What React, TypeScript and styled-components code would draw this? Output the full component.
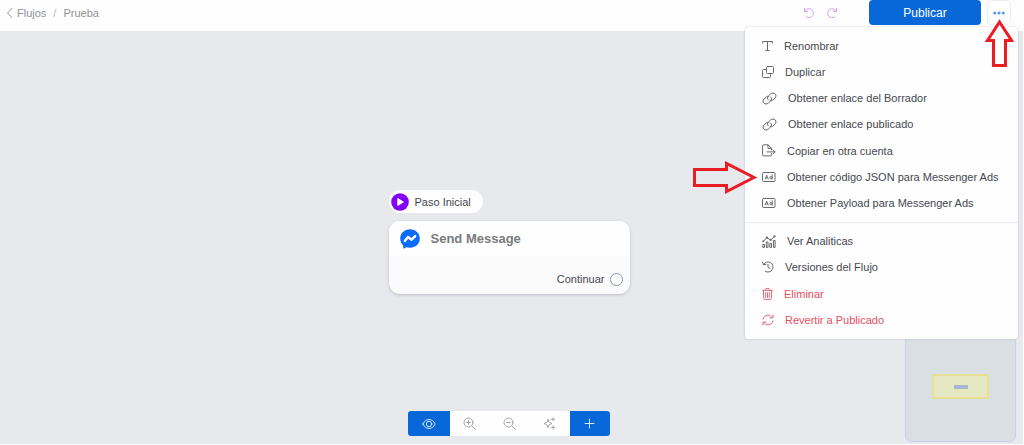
import React from "react";
import styled, { createGlobalStyle, css } from "styled-components";

const GlobalStyle = createGlobalStyle`
  *, *::before, *::after { box-sizing: border-box; }
  html, body, #root { height: 100%; }
  body {
    margin: 0;
    background: #fdfdfe;
    color: #45484e;
    font: 11px/16px "Liberation Sans", Arial, sans-serif;
  }
  button { font: inherit; color: inherit; margin: 0; padding: 0; border: 0; background: none; cursor: pointer; }
  a { color: inherit; text-decoration: none; }
  ul { list-style: none; margin: 0; padding: 0; }
  svg { display: block; flex: none; }
`;

const Page = styled.div`
  display: flex;
  flex-direction: column;
  min-height: 100%;
  padding: 0 1px 1px 0;
`;

const Header = styled.header`
  position: relative;
  z-index: 2;
  display: flex;
  justify-content: space-between;
  height: 31px;
  padding: 0 12px 6px 6px;
  background: #fefefe;
`;

const Breadcrumb = styled.nav`
  display: flex;
  align-items: center;
  gap: 7px;
  color: #8f9195;
`;

const BackLink = styled.a`
  display: flex;
  align-items: center;
  gap: 4px;
`;

const Separator = styled.span`
  color: #b9babd;
`;

const Actions = styled.div`
  display: flex;
  align-items: center;
`;

const HistoryButton = styled.button`
  display: grid;
  place-items: center;
  width: 23px;
  height: 24px;
  color: #cfa0f6;
`;

const PublishButton = styled.button`
  width: 112px;
  height: 25px;
  margin: 0 6px 0 26px;
  border-radius: 4px;
  background: #0868da;
  color: #fff;
  font-size: 12px;
`;

const MoreButton = styled.button`
  display: grid;
  place-items: center;
  width: 24px;
  height: 25px;
  border: 1px solid #eceef2;
  border-radius: 4px;
  color: #5b9be8;
`;

const Menu = styled.div`
  position: absolute;
  top: 27px;
  right: 5px;
  width: 273px;
  padding: 6px 0;
  border-radius: 3px;
  background: #fefefe;
  box-shadow: 0 0 2px rgba(40, 50, 80, 0.28);
`;

const MenuGroup = styled.ul<{ $height: number }>`
  display: grid;
  grid-auto-rows: 1fr;
  min-height: ${(p) => p.$height}px;

  & + & {
    margin-top: 6px;
    padding-top: 5px;
    border-top: 1px solid #ebecef;
  }
`;

const MenuItem = styled.button<{ $danger?: boolean }>`
  display: flex;
  align-items: center;
  gap: 11px;
  width: 100%;
  height: 100%;
  padding: 0 17px;
  text-align: left;
  white-space: nowrap;
  color: ${(p) => (p.$danger ? "#e2505f" : "#45484e")};

  svg {
    color: ${(p) => (p.$danger ? "#e66a76" : "#66696e")};
  }
`;

const Canvas = styled.main`
  position: relative;
  flex: 1;
  min-height: 413px;
  overflow: hidden;
  background: #e8e9ed;
`;

const FlowNode = styled.section`
  position: absolute;
  top: 159px;
  left: calc(50% - 123px);
  width: 241px;
`;

const StartTag = styled.div`
  display: flex;
  align-items: center;
  gap: 6px;
  width: fit-content;
  height: 23px;
  padding: 0 12px 0 2px;
  border-radius: 12px;
  background: #fefefe;
`;

const Card = styled.article`
  margin-top: 8px;
  border-radius: 11px;
  overflow: hidden;
  background: #fbfbfc;
  box-shadow: 0 1px 3px rgba(60, 65, 80, 0.25);
`;

const CardHeader = styled.header`
  display: flex;
  align-items: center;
  gap: 11px;
  height: 35px;
  padding-left: 11px;
  background: #fefefe;
`;

const CardTitle = styled.h2`
  margin: 0;
  font-size: 13px;
  line-height: 16px;
  color: #7b7b7d;
`;

const CardFooter = styled.footer`
  display: flex;
  align-items: flex-end;
  justify-content: flex-end;
  gap: 5px;
  height: 38px;
  padding: 0 7px 7px;
`;

const Port = styled.button`
  width: 13px;
  height: 13px;
  margin-bottom: 1px;
  border: 1px solid #8798a8;
  border-radius: 50%;
  background: #fff;
`;

const ZoomBar = styled.div`
  position: absolute;
  bottom: 8px;
  left: calc(50% - 3px);
  display: flex;
  height: 25px;
  border-radius: 3px;
  overflow: hidden;
  background: #fefefe;
  transform: translateX(-50%);
`;

const ToolButton = styled.button<{ $primary?: boolean; $wide?: boolean }>`
  display: grid;
  place-items: center;
  width: ${(p) => (p.$wide ? 42 : 40)}px;
  color: #a3a4a7;
  ${(p) =>
    p.$primary &&
    css`
      background: #0868da;
      color: #d8e8fb;
    `}
`;

const MiniMap = styled.div`
  position: absolute;
  right: 7px;
  bottom: 2px;
  display: grid;
  place-items: center;
  width: 111px;
  height: 111px;
  border: 1px solid #c8d0f0;
  border-radius: 6px;
  background: #dadfe4;
`;

const MiniView = styled.div`
  display: grid;
  place-items: center;
  width: 57px;
  height: 25px;
  border: 2px solid #e8e094;
  background: #e6e8c4;
`;

const MiniNode = styled.span`
  width: 14px;
  height: 4px;
  background: #a9b6cf;
`;

const UpArrow = styled.svg`
  position: absolute;
  top: 18px;
  right: 9px;
`;

const RightArrow = styled.svg`
  position: absolute;
  top: 160px;
  right: 265px;
`;

type IconProps = { w: number; h: number; sw?: number; children: React.ReactNode };

const Icon = ({ w, h, sw = 1, children }: IconProps) => (
  <svg
    width={w}
    height={h}
    viewBox={`0 0 ${w} ${h}`}
    fill="none"
    stroke="currentColor"
    strokeWidth={sw}
    strokeLinecap="round"
    strokeLinejoin="round"
    aria-hidden="true"
  >
    {children}
  </svg>
);

const LinkIcon = () => (
  <Icon w={15} h={13}>
    <path d="M6.200 7.800C5 6.600 5.300 5.100 6.300 4.100L8.700 1.900C10 .8 12 .8 13.200 1.900C14.300 3.100 14.200 4.800 13.100 5.900L10.800 8C10 8.700 9 8.900 8.100 8.600" />
    <path d="M8.800 5.200C10 6.400 9.700 7.900 8.700 8.900L6.300 11.100C5 12.200 3 12.200 1.800 11.100C.7 9.900 .8 8.200 1.900 7.100L4.200 5C5 4.300 6 4.100 6.900 4.400" />
  </Icon>
);

const AdIcon = () => (
  <Icon w={14} h={12}>
    <rect x="0.500" y="1.500" width="12.500" height="9" rx="1" />
    <path strokeWidth="0.900" d="M3.200 8L4.700 4.200L6.200 8M3.800 6.900H5.700" />
    <path strokeWidth="0.900" d="M10.200 3.800V8M10.200 6.700A1.200 1.200 0 1 0 7.800 6.700A1.200 1.200 0 1 0 10.200 6.700" />
  </Icon>
);

const icons = {
  text: (
    <Icon w={11} h={12}>
      <path d="M.6 3V1.500H10.400V3M5.500 1.500V10.500M3.700 10.500H7.300" />
    </Icon>
  ),
  copy: (
    <Icon w={12} h={12}>
      <rect x="4.500" y="0.500" width="7" height="7" rx="1" />
      <path d="M4.500 3.500H1.500A1 1 0 0 0 .5 4.500V10.500A1 1 0 0 0 1.500 11.500H7.500A1 1 0 0 0 8.500 10.500V7.500" />
    </Icon>
  ),
  link: <LinkIcon />,
  exportFile: (
    <Icon w={14} h={13}>
      <path d="M9.500 9.800V10.900A1 1 0 0 1 8.500 11.900H1.600A1 1 0 0 1 .6 10.900V1.800A1 1 0 0 1 1.600 .8H6L9.500 4.300V6M6 .8V4.300H9.500M5 7.900H13M11 5.900L13 7.900L11 9.900" />
    </Icon>
  ),
  ad: <AdIcon />,
  chart: (
    <Icon w={14} h={13}>
      <path d="M.8 12V9.500H2.500V12ZM4.300 12V7H6V12ZM7.800 12V8.500H9.500V12ZM11.400 12V5.500H13.100V12Z" />
      <path d="M1.200 6.400L4.900 2.600L8.600 5L12.500 1.300" />
      <g fill="currentColor" stroke="none">
        <circle cx="1.300" cy="6.300" r="1" />
        <circle cx="4.900" cy="2.700" r="1.100" />
        <circle cx="8.600" cy="4.900" r="1.100" />
        <circle cx="12.500" cy="1.400" r="1.100" />
      </g>
    </Icon>
  ),
  history: (
    <Icon w={12} h={12}>
      <path d="M1.400 3.600A5.100 5.100 0 1 1 3.300 10.400M.6 1.200L1.300 3.800L3.900 3.400M6 3.400V6.400L8 7.500" />
    </Icon>
  ),
  trash: (
    <Icon w={11} h={12}>
      <path d="M.6 2.400H10.400M3.500 2.400V1.200Q3.500 .6 4.100 .6H6.900Q7.500 .6 7.500 1.200V2.400M1.400 2.400L1.700 10.400Q1.800 11.400 2.700 11.400H8.300Q9.200 11.400 9.300 10.400L9.600 2.400M3.700 4.600V9.400M5.500 4.600V9.400M7.300 4.600V9.400" />
    </Icon>
  ),
  revert: (
    <Icon w={12} h={12}>
      <path d="M1 5.200A5 5 0 0 1 10.300 3.600M11 .9V3.900H8M11 6.800A5 5 0 0 1 1.700 8.400M1 11.100V8.100H4" />
    </Icon>
  ),
};

type Entry = { label: string; icon: keyof typeof icons; danger?: boolean };

const shareEntries: Entry[] = [
  { label: "Renombrar", icon: "text" },
  { label: "Duplicar", icon: "copy" },
  { label: "Obtener enlace del Borrador", icon: "link" },
  { label: "Obtener enlace publicado", icon: "link" },
  { label: "Copiar en otra cuenta", icon: "exportFile" },
  { label: "Obtener código JSON para Messenger Ads", icon: "ad" },
  { label: "Obtener Payload para Messenger Ads", icon: "ad" },
];

const manageEntries: Entry[] = [
  { label: "Ver Analiticas", icon: "chart" },
  { label: "Versiones del Flujo", icon: "history" },
  { label: "Eliminar", icon: "trash", danger: true },
  { label: "Revertir a Publicado", icon: "revert", danger: true },
];

const Entries = ({ entries, height }: { entries: Entry[]; height: number }) => (
  <MenuGroup $height={height}>
    {entries.map((e) => (
      <li key={e.label}>
        <MenuItem type="button" $danger={e.danger}>
          {icons[e.icon]}
          {e.label}
        </MenuItem>
      </li>
    ))}
  </MenuGroup>
);

export default function App() {
  return (
    <>
      <GlobalStyle />
      <Page>
        <Header>
          <Breadcrumb aria-label="Ruta">
            <BackLink href="#flujos">
              <Icon w={7} h={12}>
                <path d="M5.800 1.500L1.500 6L5.800 10.500" />
              </Icon>
              Flujos
            </BackLink>
            <Separator>/</Separator>
            <span>Prueba</span>
          </Breadcrumb>
          <Actions>
            <HistoryButton type="button" aria-label="Deshacer">
              <Icon w={12} h={12}>
                <path d="M1.500 1.500V4.500H4.500M1.800 4.300A4.500 4.500 0 1 1 3.200 9.800" />
              </Icon>
            </HistoryButton>
            <HistoryButton type="button" aria-label="Rehacer">
              <Icon w={12} h={12}>
                <path d="M10.500 1.500V4.500H7.500M10.200 4.300A4.500 4.500 0 1 0 8.800 9.800" />
              </Icon>
            </HistoryButton>
            <PublishButton type="button">Publicar</PublishButton>
            <MoreButton type="button" aria-label="Más opciones">
              <svg width="12" height="4" viewBox="0 0 12 4" fill="currentColor" aria-hidden="true">
                <circle cx="1.800" cy="2" r="1.600" />
                <circle cx="6" cy="2" r="1.600" />
                <circle cx="10.200" cy="2" r="1.600" />
              </svg>
            </MoreButton>
          </Actions>
          <Menu>
            <Entries entries={shareEntries} height={183} />
            <Entries entries={manageEntries} height={111} />
          </Menu>
          <UpArrow width="29" height="50" viewBox="0 0 29 50" fill="none" stroke="#ec1c24" strokeWidth="3" aria-hidden="true">
            <path d="M14.500 4L26.500 22.500H20.500V47.500H8.500V22.500H2.500Z" />
          </UpArrow>
          <RightArrow width="66" height="35" viewBox="0 0 66 35" fill="none" stroke="#ec1c24" strokeWidth="3" aria-hidden="true">
            <path d="M62 17.500L34.500 31.500V25.500H2.500V9.500H34.500V3.500Z" />
          </RightArrow>
        </Header>
        <Canvas>
          <FlowNode>
            <StartTag>
              <svg width="18" height="18" viewBox="0 0 18 18" aria-hidden="true">
                <circle cx="9" cy="9" r="8.800" fill="#8200fb" />
                <path d="M6.800 5.600V12.400L12.400 9Z" fill="#fff" stroke="#fff" strokeLinejoin="round" />
              </svg>
              Paso Inicial
            </StartTag>
            <Card>
              <CardHeader>
                <svg width="20" height="20" viewBox="0 0 20 20" aria-hidden="true">
                  <path
                    d="M10 .2C4.500 .2 .2 4.200 .2 9.500C.2 12.300 1.300 14.700 3.200 16.400V19.800L6.400 18.300C7.500 18.600 8.700 18.800 10 18.800C15.500 18.800 19.800 14.800 19.800 9.500S15.500 .2 10 .2Z"
                    fill="#0a6cff"
                  />
                  <path d="M4.800 11.900L8 8L11.600 10.700L15.200 7.100" fill="none" stroke="#fff" strokeWidth="2.400" strokeLinejoin="round" strokeLinecap="round" />
                </svg>
                <CardTitle>Send Message</CardTitle>
              </CardHeader>
              <CardFooter>
                Continuar
                <Port type="button" aria-label="Conectar Continuar" />
              </CardFooter>
            </Card>
          </FlowNode>
          <ZoomBar>
            <ToolButton type="button" aria-label="Vista previa" $primary $wide>
              <Icon w={14} h={12}>
                <path d="M.8 6C2.200 3.200 4.500 1.500 7 1.500S11.800 3.200 13.200 6C11.800 8.800 9.500 10.500 7 10.500S2.200 8.800 .8 6Z" />
                <circle cx="7" cy="6" r="2.700" />
              </Icon>
            </ToolButton>
            <ToolButton type="button" aria-label="Acercar">
              <Icon w={13} h={13}>
                <circle cx="5.500" cy="5.500" r="4.500" />
                <path d="M8.900 8.900L12.300 12.300M5.500 3.700V7.300M3.700 5.500H7.300" />
              </Icon>
            </ToolButton>
            <ToolButton type="button" aria-label="Alejar">
              <Icon w={13} h={13}>
                <circle cx="5.500" cy="5.500" r="4.500" />
                <path d="M8.900 8.900L12.300 12.300M3.700 5.500H7.300" />
              </Icon>
            </ToolButton>
            <ToolButton type="button" aria-label="Ordenar">
              <Icon w={13} h={13}>
                <path d="M5 2.500L6.200 5.300L9 6.500L6.200 7.700L5 10.500L3.800 7.700L1 6.500L3.800 5.300Z" />
                <path d="M10 .8V3.800M8.500 2.300H11.500M10.200 8.800V12M8.600 10.400H11.800" />
              </Icon>
            </ToolButton>
            <ToolButton type="button" aria-label="Agregar" $primary>
              <Icon w={11} h={11}>
                <path d="M5.500 1V10M1 5.500H10" />
              </Icon>
            </ToolButton>
          </ZoomBar>
          <MiniMap>
            <MiniView>
              <MiniNode />
            </MiniView>
          </MiniMap>
        </Canvas>
      </Page>
    </>
  );
}
